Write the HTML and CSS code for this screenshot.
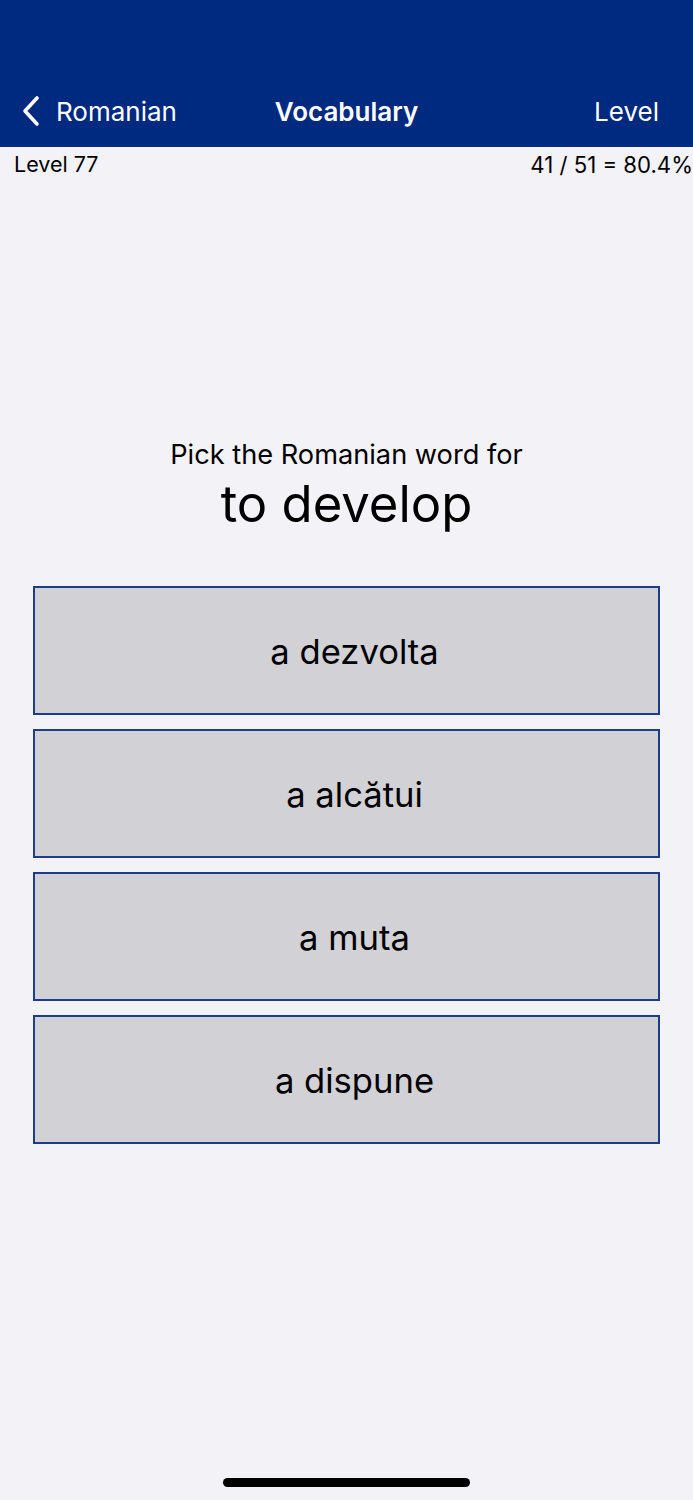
FILE: index.html
```html
<!DOCTYPE html>
<html lang="en">
<head>
    <meta charset="UTF-8">
    <meta name="viewport" content="width=device-width, initial-scale=1.0">
    <title>Vocabulary</title>
    <link rel="stylesheet" href="styles.css">
</head>
<body>

    <!-- Navigation bar -->
    <header class="nav-bar">
        <div class="nav-row">
            <a class="nav-back" href="#">
                <svg class="chevron" width="20" height="32" viewBox="0 0 20 32">
                    <path d="M16 3 L4 16 L16 29" fill="none" stroke="#fff" stroke-width="3.6" stroke-linecap="round" stroke-linejoin="round"/>
                </svg>
                <span>Romanian</span>
            </a>
            <h1 class="nav-title">Vocabulary</h1>
            <a class="nav-action" href="#">Level</a>
        </div>
    </header>

    <!-- Level and score -->
    <div class="status-row">
        <span>Level 77</span>
        <span class="score">41 / 51 = 80.4%</span>
    </div>

    <!-- Question -->
    <main class="quiz">
        <p class="prompt">Pick the Romanian word for</p>
        <p class="word">to develop</p>

        <div class="choices">
            <button class="choice">a dezvolta</button>
            <button class="choice">a alcătui</button>
            <button class="choice">a muta</button>
            <button class="choice">a dispune</button>
        </div>
    </main>

    <div class="home-indicator"></div>

</body>
</html>
```

FILE: styles.css
```css
body {
    margin: 0;
    height: 1500px;
    background-color: #f2f2f7;
    font-family: Inter, "Noto Sans", sans-serif;
    color: #000;
    position: relative;
}
.nav-bar {
    height: 147px;
    background-color: #002a80;
    display: flex;
    align-items: flex-end;
}
.nav-row {
    width: 100%;
    height: 72px;
    display: flex;
    align-items: center;
    justify-content: space-between;
    position: relative;
    padding: 0 34px 0 21px;
    box-sizing: border-box;
}
.nav-back, .nav-action {
    color: #fff;
    text-decoration: none;
    font-size: 26px;
    display: flex;
    align-items: center;
}
.chevron {
    margin-right: 15px;
}
.nav-title {
    position: absolute;
    left: 0;
    right: 0;
    margin: 0;
    text-align: center;
    color: #fff;
    font-size: 26px;
    font-weight: 600;
    pointer-events: none;
}
.status-row {
    height: 34px;
    display: flex;
    align-items: center;
    justify-content: space-between;
    padding: 0 0 0 14px;
    font-size: 21.5px;
}
.score {
    font-size: 22.2px;
}
.quiz {
    padding-top: 257px;
    text-align: center;
}
.prompt {
    margin: 0;
    font-size: 27.2px;
    line-height: 34px;
}
.word {
    margin: 0;
    font-size: 50.8px;
    line-height: 64px;
}
.choices {
    margin: 50px 33px 0 33px;
    display: flex;
    flex-direction: column;
    gap: 14px;
}
.choice {
    height: 129px;
    background-color: #d1d1d6;
    border: 2px solid #1c3c8c;
    font-family: inherit;
    font-size: 34.6px;
    color: #000;
    padding: 0 0 0 16px;
    cursor: pointer;
}
.home-indicator {
    position: absolute;
    left: 223px;
    top: 1478px;
    width: 247px;
    height: 9px;
    border-radius: 5px;
    background-color: #000;
}
```
